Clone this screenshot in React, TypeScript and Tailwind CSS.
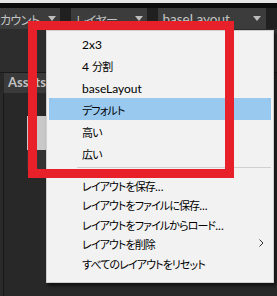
import React from "react";

const Tri = () => (
  <svg width="8" height="5" viewBox="0 0 8 5" className="shrink-0">
    <path d="M0 0 L8 0 L4 5 Z" fill="#bdbdbd" />
  </svg>
);

function Mixed({ text, big }: { text: string; big?: boolean }) {
  const runs = text.match(/[\x00-\x7f]+|[^\x00-\x7f]+/g) || [];
  return (
    <span className="whitespace-nowrap">
      {runs.map((r, i) =>
        /^[\x00-\x7f]/.test(r) ? (
          <span
            key={i}
            className={
              big
                ? "font-['Lato',sans-serif] text-[13.5px]"
                : "font-['Lato',sans-serif] text-[12px]"
            }
          >
            {r}
          </span>
        ) : (
          <span
            key={i}
            className={
              big
                ? "font-['Noto_Sans_CJK_JP',sans-serif] text-[12px] tracking-[-0.6px] [font-feature-settings:'palt']"
                : "font-['Noto_Sans_CJK_JP',sans-serif] text-[11px] tracking-[-0.9px] [font-feature-settings:'palt']"
            }
          >
            {r}
          </span>
        )
      )}
    </span>
  );
}

const topItems = ["2x3", "4 分割", "baseLayout", "デフォルト", "高い", "広い"];
const bottomItems = [
  "レイアウトを保存...",
  "レイアウトをファイルに保存...",
  "レイアウトをファイルからロード...",
  "レイアウトを削除",
  "すべてのレイアウトをリセット",
];

export default function App() {
  return (
    <div className="relative w-[277px] h-[296px] overflow-hidden bg-[#282828] font-['Lato',sans-serif]">
      <div className="h-[3px] bg-[#e6e6e6]" />
      <div className="h-[5px] bg-[#0c0c0c]" />
      <div className="flex h-[21px] bg-[#202020] gap-[11px] text-[#c4c4c4]">
        <div className="w-[60px] flex items-center justify-between pr-[4px] bg-[#3c3c3c]">
          <span className="leading-none">
            <Mixed text="カウント" big />
          </span>
          <Tri />
        </div>
        <div className="w-[77px] flex items-center justify-between pl-[5px] pr-[4px] bg-[#3c3c3c]">
          <span className="leading-none">
            <Mixed text="レイヤー" big />
          </span>
          <Tri />
        </div>
        <div className="w-[108px] flex items-center justify-between pl-[4px] pr-[5px] bg-[#3c3c3c]">
          <span className="leading-none">
            <Mixed text="baseLayout" big />
          </span>
          <Tri />
        </div>
        <div className="flex-1 bg-[#1c1c1c]" />
      </div>
      <div className="h-[44px] bg-[#2d2d2d] border-b border-[#1a1a1a]" />
      <div className="flex h-[20px] bg-[#282828]">
        <div className="ml-[4px] px-[4px] flex items-center bg-[#3a3a3a] text-[#c2c2c2] font-bold text-[13px]">
          Assets
        </div>
      </div>
      <div className="flex h-[203px]">
        <div className="w-[3px] bg-[#2a2a2a]" />
        <div className="w-px bg-[#191919]" />
        <div className="flex-1 pt-[23px] pl-[23px]">
          <div className="w-[19px] h-[34px] bg-[#c8c8c8]" />
          <div className="w-[19px] h-[20px] bg-[#333]" />
        </div>
      </div>

      {/* context menu */}
      <div className="absolute left-[46px] top-[30px] w-[228px] h-[253px] bg-[#f2f2f2] border border-[#cfcfcf] shadow-[2px_3px_3px_rgba(0,0,0,0.55)] px-[2px] pt-[1px] text-black">
        {topItems.map((t) => (
          <div
            key={t}
            className={
              t === "デフォルト"
                ? "h-[22px] flex items-center pl-[33px] bg-[#99c9ef]"
                : "h-[22px] flex items-center pl-[33px]"
            }
          >
            <Mixed text={t} />
          </div>
        ))}
        <div className="mt-[3px] ml-[28px] h-px bg-[#d0d0d0]" />
        <div className="mt-[7px]">
          {bottomItems.map((t) => (
            <div key={t} className="h-[19.5px] flex items-center pl-[33px] pr-[7px] justify-between">
              <Mixed text={t} />
              {t === "レイアウトを削除" && (
                <svg width="5" height="8" viewBox="0 0 5 8">
                  <path d="M0.5 0.5 L4 4 L0.5 7.5" fill="none" stroke="#333" strokeWidth="1" />
                </svg>
              )}
            </div>
          ))}
        </div>
      </div>

      {/* annotation rectangle */}
      <div className="absolute left-[28px] top-[21px] w-[206px] h-[157px] border-[9px] border-[#e8202a]" />
    </div>
  );
}
